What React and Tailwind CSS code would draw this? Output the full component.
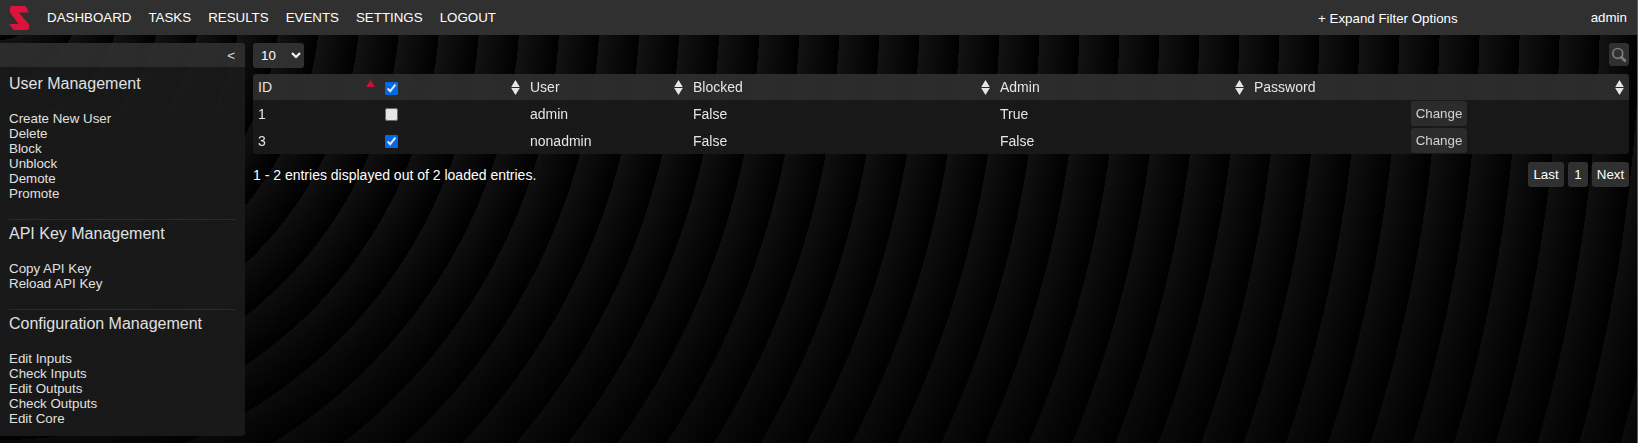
import React from "react";

const NAV = ["DASHBOARD", "TASKS", "RESULTS", "EVENTS", "SETTINGS", "LOGOUT"];

const SECTIONS = [
  { title: "User Management", items: ["Create New User", "Delete", "Block", "Unblock", "Demote", "Promote"] },
  { title: "API Key Management", items: ["Copy API Key", "Reload API Key"] },
  { title: "Configuration Management", items: ["Edit Inputs", "Check Inputs", "Edit Outputs", "Check Outputs", "Edit Core"] },
];

const ROWS = [
  { id: 1, selected: false, user: "admin", blocked: "False", admin: "True" },
  { id: 3, selected: true, user: "nonadmin", blocked: "False", admin: "False" },
];

function Logo() {
  return (
    <svg className="h-[24px] w-[20px] shrink-0" viewBox="0 0 20 24" fill="#dc143c">
      <path d="M3 0H15.4Q16.6 0 17.1 1L19.8 6.4H9.8L19.2 17.4Q20 18.4 20 19.4V22Q20 24 18 24H5.4Q4.3 24 3.7 23L0.4 18H9.6L1.6 7.3Q1 6.5 1 5.6V2Q1 0 3 0Z" />
    </svg>
  );
}

function SortIcon() {
  return (
    <svg className="mr-[5px] h-[15px] w-[9px] shrink-0" viewBox="0 0 9 15" fill="#fff">
      <path d="M4.5 0L8.8 7H0.2Z" />
      <path d="M4.5 15L8.8 8H0.2Z" />
    </svg>
  );
}

function AscIcon() {
  return (
    <svg className="mr-[5px] h-[15px] w-[9px] shrink-0" viewBox="0 0 9 15" fill="#dc143c">
      <path d="M4.5 0L8.8 7H0.2Z" />
    </svg>
  );
}

function HeadCell({ children, icon }) {
  return (
    <th className="h-[26px] p-0 font-normal">
      <div className="flex h-[26px] items-center justify-between pl-[5px]">
        {children}
        {icon}
      </div>
    </th>
  );
}

function Check({ checked }) {
  return <input type="checkbox" defaultChecked={checked} className="block h-[13px] w-[13px]" />;
}

export default function App() {
  return (
    <div className="flex h-[443px] w-full flex-col overflow-hidden border-r border-[#5c5c5c] bg-[linear-gradient(to_bottom,rgba(0,0,0,0)_0px,rgba(0,0,0,0.5)_443px),repeating-radial-gradient(circle_at_0_0,#141414_0px,#000_40px)] font-['Liberation_Sans',Arial,sans-serif] text-[13.333px] text-white">
      <nav className="flex h-[35px] shrink-0 items-center bg-[#303030] pr-[10px] pl-[9px]">
        <Logo />
        <div className="ml-[18px] flex gap-[17px] leading-[15px]">
          {NAV.map((n) => (
            <a key={n}>{n}</a>
          ))}
        </div>
        <span className="mt-[2px] ml-auto leading-[15px]">+ Expand Filter Options</span>
        <span className="ml-[133px] leading-[15px]">admin</span>
      </nav>

      <div className="flex items-start pt-[8px] pr-[8px]">
        <aside className="w-[245px] shrink-0 overflow-hidden rounded-r-[3px] text-[#f8f8f8] opacity-90">
          <div className="flex h-[24px] items-center justify-end bg-[#303030] pr-[10px] leading-[15px]">&lt;</div>
          <div className="h-[369px] bg-[#1b1b1b] pt-[2px] pr-[10px] pl-[9px]">
            {SECTIONS.map((s, i) => (
              <section key={s.title} className={i ? "border-t border-[#303030] pb-[18px]" : "border-t border-transparent pb-[18px]"}>
                <h2 className="mt-[5px] mb-[18px] text-[16px] leading-[18px]">{s.title}</h2>
                {s.items.map((t) => (
                  <div key={t} className="leading-[15px]">{t}</div>
                ))}
              </section>
            ))}
          </div>
        </aside>

        <main className="ml-[8px] flex min-w-0 flex-1 flex-col">
          <div className="flex items-start justify-between">
            <select className="h-[25px] w-[51px] rounded-[3px] bg-[#303030] pl-[4px] text-[13.333px] text-white" defaultValue="10">
              <option>10</option>
            </select>
            <button className="flex h-[23px] w-[20px] items-center justify-center rounded-[3px] bg-[#303030]">
              <svg className="mt-[1px] h-[16px] w-[16px]" viewBox="0 0 16 16" fill="none" stroke="#7c7c7c">
                <circle cx="6.8" cy="6.4" r="4.9" strokeWidth="1.7" />
                <path d="M10.4 10.2L14 13.8" strokeWidth="2.7" strokeLinecap="round" />
              </svg>
            </button>
          </div>

          <table className="mt-[6px] w-full table-fixed border-collapse overflow-hidden rounded-[3px] text-left text-[14px] leading-[17px] opacity-90">
            <colgroup>
              <col className="w-[127px]" />
              <col className="w-[145px]" />
              <col className="w-[163px]" />
              <col className="w-[307px]" />
              <col className="w-[254px]" />
              <col className="w-[380px]" />
            </colgroup>
            <thead className="bg-[#303030]">
              <tr>
                <HeadCell icon={<AscIcon />}>ID</HeadCell>
                <HeadCell icon={<SortIcon />}>
                  <div className="pt-[3px]"><Check checked /></div>
                </HeadCell>
                <HeadCell icon={<SortIcon />}>User</HeadCell>
                <HeadCell icon={<SortIcon />}>Blocked</HeadCell>
                <HeadCell icon={<SortIcon />}>Admin</HeadCell>
                <HeadCell icon={<SortIcon />}>Password</HeadCell>
              </tr>
            </thead>
            <tbody className="bg-[#1b1b1b]">
              {ROWS.map((r) => (
                <tr key={r.id} className="h-[27px]">
                  <td className="p-0 pt-[2px] pl-[5px]">{r.id}</td>
                  <td className="p-0 pt-[1px] pl-[5px]"><Check checked={r.selected} /></td>
                  <td className="p-0 pt-[2px] pl-[5px]">{r.user}</td>
                  <td className="p-0 pt-[2px] pl-[5px]">{r.blocked}</td>
                  <td className="p-0 pt-[2px] pl-[5px]">{r.admin}</td>
                  <td className="p-0">
                    <button className="mx-auto block h-[25px] w-[56px] rounded-[3px] bg-[#303030] text-[13.333px] leading-[15px] text-[#e8e8e8]">Change</button>
                  </td>
                </tr>
              ))}
            </tbody>
          </table>

          <div className="mt-[8px] flex items-center">
            <span className="pt-[2px] text-[14px] leading-[17px]">1 - 2 entries displayed out of 2 loaded entries.</span>
            <div className="ml-auto flex gap-[4px]">
              <button className="h-[25px] w-[36px] rounded-[3px] bg-[#303030]">Last</button>
              <button className="h-[25px] w-[20px] rounded-[3px] bg-[#303030]">1</button>
              <button className="h-[25px] w-[37px] rounded-[3px] bg-[#303030]">Next</button>
            </div>
          </div>
        </main>
      </div>
    </div>
  );
}
